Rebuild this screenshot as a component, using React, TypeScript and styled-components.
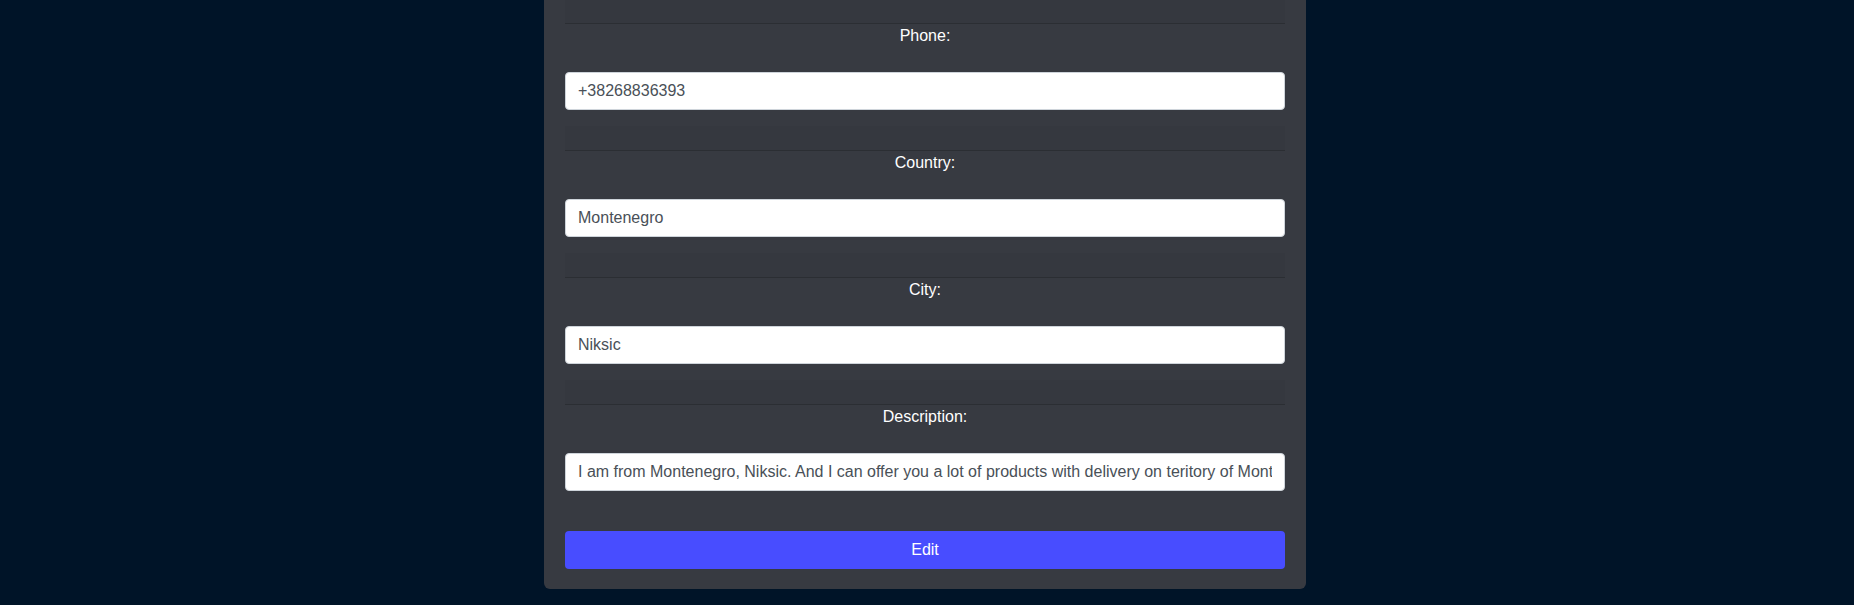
import React from "react";
import styled, { createGlobalStyle } from "styled-components";

const GlobalStyle = createGlobalStyle`
  html, body {
    margin: 0;
    padding: 0;
    background: #001428;
    font-family: "Liberation Sans", Arial, sans-serif;
  }
`;

const Page = styled.div`
  min-height: 605px;
  background: #001428;
`;

const Panel = styled.div`
  width: 762px;
  box-sizing: border-box;
  margin-left: 544px;
  padding: 0 21px 20px;
  background: #373a41;
  border-radius: 0 0 6px 6px;
  display: flex;
  flex-direction: column;
`;

const Divider = styled.div<{ $height?: number; $top?: number }>`
  height: ${(p) => p.$height ?? 24}px;
  margin-top: ${(p) => p.$top ?? 0}px;
  background: #35383f;
  border-bottom: 1px solid #2b2e33;
`;

const Label = styled.label`
  display: block;
  text-align: center;
  color: #ffffff;
  font-size: 16px;
  line-height: 24px;
  margin-bottom: 24px;
`;

const Input = styled.input`
  display: block;
  width: 100%;
  box-sizing: border-box;
  height: 38px;
  padding: 6px 12px;
  font-family: "Liberation Sans", Arial, sans-serif;
  font-size: 16px;
  color: #495057;
  background: #ffffff;
  border: 1px solid #ced4da;
  border-radius: 4px;
  outline: none;
`;

const Button = styled.button`
  margin-top: 40px;
  height: 38px;
  width: 100%;
  border: none;
  border-radius: 4px;
  background: #484dff;
  color: #ffffff;
  font-family: "Liberation Sans", Arial, sans-serif;
  font-size: 16px;
  cursor: pointer;
`;

const fields = [
  { label: "Phone:", value: "+38268836393" },
  { label: "Country:", value: "Montenegro" },
  { label: "City:", value: "Niksic" },
  {
    label: "Description:",
    value:
      "I am from Montenegro, Niksic. And I can offer you a lot of products with delivery on teritory of Montenegro.",
  },
];

function App() {
  return (
    <Page>
      <GlobalStyle />
      <Panel>
        <Divider $height={23} />
        {fields.map((f, i) => (
          <React.Fragment key={f.label}>
            <Label>{f.label}</Label>
            <Input type="text" value={f.value} readOnly />
            {i < fields.length - 1 && <Divider $top={16} />}
          </React.Fragment>
        ))}
        <Button>Edit</Button>
      </Panel>
    </Page>
  );
}

export default App;
